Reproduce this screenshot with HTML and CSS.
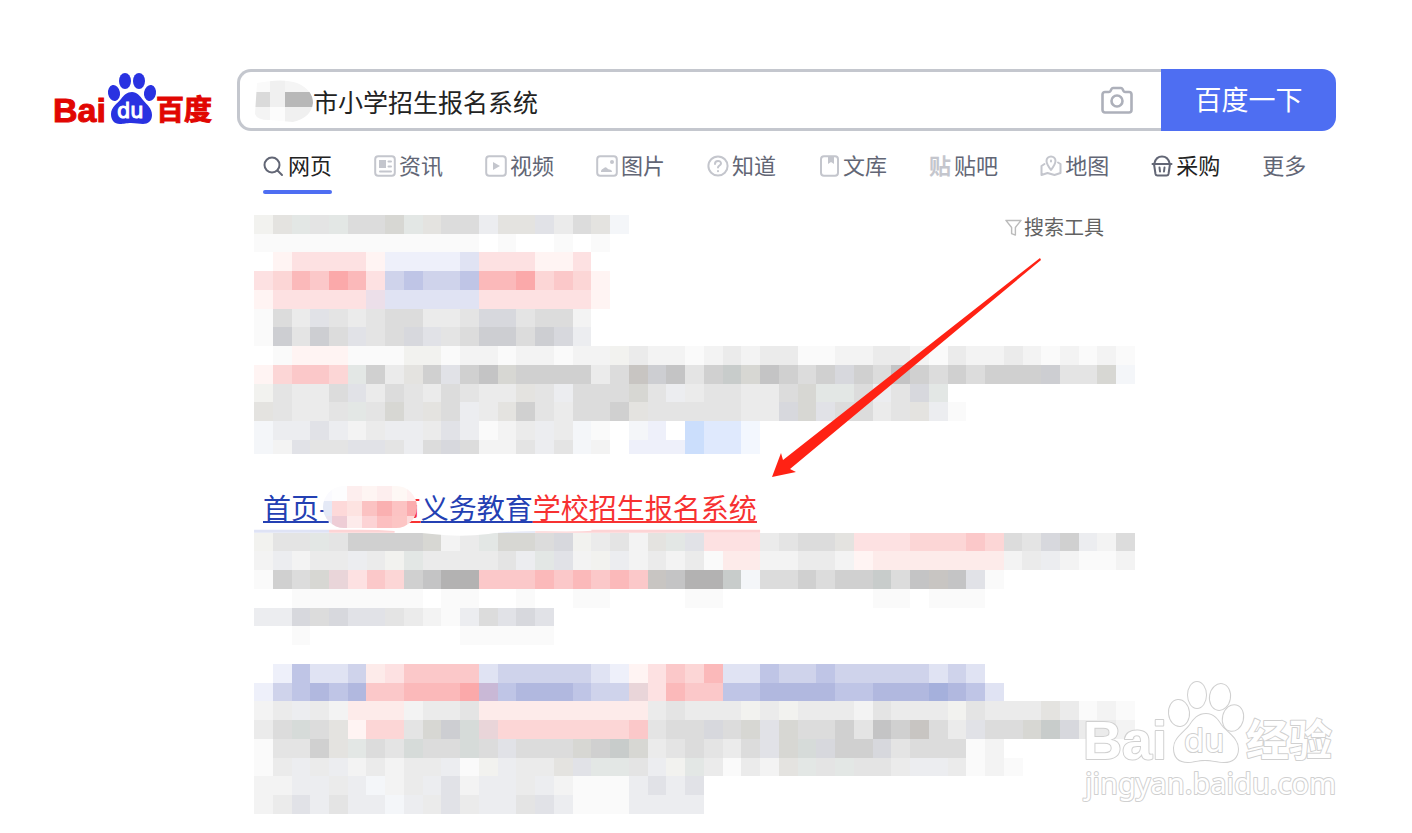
FILE: index.html
```
<!DOCTYPE html>
<html lang="zh-CN">
  <head>
    <meta charset="UTF-8" />
    <meta name="viewport" content="width=device-width, initial-scale=1" />
    <title>百度搜索</title>
    <link rel="stylesheet" href="styles.css" />
  </head>
  <body>
    <header class="header">
      <a class="logo" href="#" aria-label="百度">
        <svg viewBox="0 0 160 56" width="160" height="56">
          <text class="logo-latin" x="0" y="50">Bai</text>
          <g fill="#2932e1">
            <ellipse cx="61" cy="21" rx="6" ry="8" transform="rotate(-10 61 21)" />
            <ellipse cx="72" cy="9" rx="6" ry="8" />
            <ellipse cx="86" cy="9" rx="6" ry="8" />
            <ellipse cx="97" cy="21" rx="6" ry="8" transform="rotate(10 97 21)" />
            <path d="M79 20c5 0 8 4 11 8 4 5 9 8 9 15 0 6-4 9-9 9-4 0-7-1-12-1s-7 1-11 1c-6 0-9-4-9-10 0-7 6-10 10-15 3-4 6-7 11-7z" />
          </g>
          <text class="logo-du" x="64" y="46">du</text>
          <text class="logo-cjk" x="103" y="48">百度</text>
        </svg>
      </a>
      <form class="search" onsubmit="return false">
        <div class="search-box">
          <svg class="mask-small" viewBox="0 0 58 42" width="58" height="42" aria-hidden="true">
            <clipPath id="clip-small"><path d="M2 3Q28-2 42 3Q58 10 58 23Q56 38 38 42L14 40Q2 40 0 34z" /></clipPath>
            <g clip-path="url(#clip-small)" shape-rendering="crispEdges">
              <path fill="#fafafa" d="M0 0h15v12H0z" />
              <path fill="#f0f0f0" d="M15 0h15v12H15z" />
              <path fill="#f5f5f5" d="M30 0h28v12H30z" />
              <path fill="#dadada" d="M0 12h15v15H0z" />
              <path fill="#f0f0f0" d="M15 12h15v15H15z" />
              <path fill="#b8b8b8" d="M30 12h28v15H30z" />
              <path fill="#f4f4f4" d="M0 27h15v15H0z" />
              <path fill="#fcfcfc" d="M15 27h15v15H15z" />
              <path fill="#f0f0f0" d="M30 27h28v15H30z" />
            </g>
          </svg>
          <input type="text" class="search-input" value="市小学招生报名系统" aria-label="搜索" />
          <button type="button" class="camera-btn" aria-label="按图片搜索">
            <svg viewBox="0 0 32 28" width="32" height="28" fill="none" stroke="#adb0ba" stroke-width="2.6" stroke-linejoin="round">
              <path d="M4 6h4q1 0 1.500-1l1-2q.5-1 1.500-1h8q1 0 1.500 1l1 2q.5 1 1.500 1h4a2.500 2.500 0 0 1 2.500 2.500v15.500a2.500 2.500 0 0 1-2.500 2.500H4a2.500 2.500 0 0 1-2.500-2.500V8.500A2.500 2.500 0 0 1 4 6z" />
              <circle cx="16" cy="15" r="5.500" />
            </svg>
          </button>
        </div>
        <button type="submit" class="search-btn">百度一下</button>
      </form>
    </header>

    <nav class="tabs">
      <a class="tab active" href="#">
        <svg class="icon dark" viewBox="0 0 22 22"><circle cx="9" cy="10" r="7.500" /><path d="M14.500 15.500l4.500 4.500" /></svg>
        <span>网页</span>
      </a>
      <a class="tab" href="#">
        <svg class="icon" viewBox="0 0 22 22"><rect x="1.200" y="1.200" width="19.600" height="19.600" rx="3" /><path class="solid" d="M5 5h7v8H5z" /><path d="M14.500 6.500H17M14.500 11.500H17M6 16.500h11" /></svg>
        <span>资讯</span>
      </a>
      <a class="tab" href="#">
        <svg class="icon" viewBox="0 0 22 22"><rect x="1.200" y="1.200" width="19.600" height="19.600" rx="3" /><path class="solid" d="M8 7l7 4-7 4z" /></svg>
        <span>视频</span>
      </a>
      <a class="tab" href="#">
        <svg class="icon" viewBox="0 0 22 22"><rect x="1.200" y="1.200" width="19.600" height="19.600" rx="3" /><circle class="solid" cx="16" cy="7" r="2" /><path class="solid" d="M5 17c0-3 2-3 3-4 2-2 3 0 4 1s4 0 4 3z" /></svg>
        <span>图片</span>
      </a>
      <a class="tab" href="#">
        <svg class="icon" viewBox="0 0 22 22"><circle cx="11" cy="11" r="9.600" /><path d="M8 9c0-4 6-4 6-.5 0 2-3 2-3 4M11 16v.3" /></svg>
        <span>知道</span>
      </a>
      <a class="tab" href="#">
        <svg class="icon" viewBox="0 0 22 22"><rect x="3" y="1.200" width="17" height="19.600" rx="3" /><path class="solid" d="M10 2h6v7l-3-2-3 2z" /></svg>
        <span>文库</span>
      </a>
      <a class="tab" href="#">
        <span class="icon-word" aria-hidden="true">贴</span>
        <span>贴吧</span>
      </a>
      <a class="tab" href="#">
        <svg class="icon" viewBox="0 0 22 22"><path d="M11 15C8 11 6.500 9 6.500 6a4.500 4.500 0 0 1 9 0c0 3-1.500 5-4.500 9zM4.500 9L1.500 11v9l6-2 7 2 6-2V9l-2.500-1.500" /><path d="M11 5.500v1" /></svg>
        <span>地图</span>
      </a>
      <a class="tab strong" href="#">
        <svg class="icon dark" viewBox="0 0 22 22"><path d="M1.500 9h19M3 9l1.500 10q.3 1.500 2 1.500h9q1.700 0 2-1.500L19 9M3.500 8C4.500 4 7 1.500 11 1.500S17.500 4 18.500 8M8.500 12.500l.5 4M13.500 12.500l-.5 4" /></svg>
        <span>采购</span>
      </a>
      <a class="tab" href="#"><span>更多</span></a>
    </nav>

    <main class="results">
      <section class="first-result">
        <svg class="mosaic" data-block="first" viewBox="0 0 188 51" aria-hidden="true"></svg>
        <a class="tools" href="#">
          <svg viewBox="0 0 18 18" width="17" height="17" fill="none" stroke="#bbb" stroke-width="1.500" stroke-linejoin="round"><path d="M1 1.500h16L11 9v8l-4-1.500V9z" /></svg>
          <span>搜索工具</span>
        </a>
      </section>

      <section>
        <h3 class="title">
          <a href="#">首页-<span class="masked"><em>市</em><svg class="mask-title" viewBox="0 0 94 42" width="94" height="42" aria-hidden="true">
            <clipPath id="clip-title"><rect width="94" height="42" rx="21" /></clipPath>
            <g clip-path="url(#clip-title)" shape-rendering="crispEdges">
              <path fill="#fafafe" d="M0 0h9v15H0z" /><path fill="#fdfdfe" d="M9 0h15v15H9z" /><path fill="#fdeeee" d="M24 0h15v15H24z" /><path fill="#fef5f3" d="M39 0h15v15H39z" /><path fill="#fdeeee" d="M54 0h15v15H54z" /><path fill="#fef8f5" d="M69 0h15v15H69z" /><path fill="#fff0f0" d="M84 0h10v15H84z" />
              <path fill="#e4e9f6" d="M0 15h9v15H0z" /><path fill="#fdd9d9" d="M9 15h15v15H9z" /><path fill="#fde3e1" d="M24 15h15v15H24z" /><path fill="#fbc2c2" d="M39 15h15v15H39z" /><path fill="#fab0b1" d="M54 15h15v15H54z" /><path fill="#fcc3c3" d="M69 15h15v15H69z" /><path fill="#fbabae" d="M84 15h10v15H84z" />
              <path fill="#e8e4f0" d="M0 30h9v12H0z" /><path fill="#eecdd6" d="M9 30h15v12H9z" /><path fill="#fdebeb" d="M24 30h15v12H24z" /><path fill="#fcd3d5" d="M39 30h15v12H39z" /><path fill="#fcbfc0" d="M54 30h15v12H54z" /><path fill="#fcc5c4" d="M69 30h15v12H69z" /><path fill="#fcdcdc" d="M84 30h10v12H84z" />
            </g>
          </svg></span>义务教育<em>学校招生报名系统</em></a>
        </h3>
        <svg class="mosaic" data-block="second" viewBox="0 -1 188 25" aria-hidden="true">
          <path fill="#dfe3f5" d="M0-.6h16V0H0zM52-.6h8V0h-8z" />
          <path fill="#fdd4d5" d="M16-.6h14V0H16zM60-.6h48V0H60z" />
        </svg>
      </section>

      <section class="last-result">
        <svg class="mosaic" data-block="third" viewBox="0 0 188 32" aria-hidden="true"></svg>
      </section>

      <svg class="arrow" viewBox="0 0 270 219" width="270" height="219" aria-hidden="true">
        <path fill="#ff2214" d="M0 219L9 195l2 7L268 0l1 2L18 211l6 3z" />
      </svg>
    </main>

    <svg class="watermark" viewBox="0 0 260 130" width="260" height="130">
      <text class="wm-latin" x="3" y="81">Bai</text>
      <ellipse cx="99" cy="35" rx="10" ry="13" transform="rotate(-6 99 35)" />
      <ellipse cx="117" cy="17" rx="9" ry="13" />
      <ellipse cx="140" cy="19" rx="10" ry="13" transform="rotate(10 140 19)" />
      <ellipse cx="153" cy="40" rx="10" ry="13" transform="rotate(14 153 40)" />
      <path d="M126 36c8 0 12 6 15 11 6 8 17 13 17 24 0 9-6 13-14 13-7 0-11-2-19-2s-11 2-17 2c-9 0-14-5-14-14 0-10 10-15 16-23 4-6 8-11 16-11z" />
      <text class="wm-du" x="104" y="74">du</text>
      <text class="wm-cjk" x="166" y="78">经验</text>
      <text class="wm-url" x="5" y="116">jingyan.baidu.com</text>
    </svg>

    <script src="mosaic.js"></script>
  </body>
</html>
```

FILE: styles.css
```
* {
  box-sizing: border-box;
}

body {
  position: relative;
  margin: 0;
  padding: 69px 76px 18px 53px;
  background-color: #fff;
  color: #222;
  font-family: "Noto Sans CJK SC", sans-serif;
}

a {
  color: inherit;
  text-decoration: none;
}

.header {
  display: flex;
  gap: 24px;
}

.logo {
  flex: none;
  padding-top: 3px;
}

.logo svg {
  display: block;
}

.logo-latin {
  fill: #e10602;
  stroke: #e10602;
  stroke-width: 1;
  font: 700 34px "Liberation Sans", sans-serif;
}

.logo-du {
  fill: #fff;
  stroke: #fff;
  stroke-width: 1;
  font: 400 21px "DejaVu Sans", sans-serif;
}

.logo-cjk {
  fill: #e10602;
  stroke: #e10602;
  stroke-width: 1;
  font: 700 28px "Noto Sans CJK SC", sans-serif;
}

.search {
  display: flex;
  flex: 1;
  height: 62px;
}

.search-box {
  display: flex;
  flex: 1;
  align-items: center;
  border: 3px solid #c4c7ce;
  border-right: none;
  border-radius: 14px 0 0 14px;
  padding: 2px 28px 0 15px;
}

.mask-small {
  flex: none;
}

.search-input {
  flex: 1;
  min-width: 0;
  border: none;
  outline: none;
  padding: 0;
  background: transparent;
  color: #222;
  font-family: inherit;
  font-size: 25px;
}

.camera-btn {
  display: flex;
  border: none;
  padding: 0 0 2px;
  background: none;
  cursor: pointer;
}

.search-btn {
  width: 175px;
  border: none;
  border-radius: 0 14px 14px 0;
  padding-bottom: 4px;
  background-color: #4e6ef2;
  color: #fff;
  font-family: inherit;
  font-size: 27px;
  cursor: pointer;
}

.search-btn:hover {
  background-color: #4662d9;
}

.tabs {
  display: flex;
  gap: 42px;
  margin-top: 18px;
  padding-left: 210px;
}

.tab {
  display: flex;
  align-items: center;
  gap: 3px;
  height: 45px;
  padding-bottom: 12px;
  color: #626675;
  font-size: 22px;
  line-height: 30px;
  white-space: nowrap;
}

.tab span {
  padding-bottom: 4px;
}

.tab.active {
  position: relative;
  color: #222;
}

.tab.active::after {
  content: "";
  position: absolute;
  left: 0;
  right: 0;
  bottom: 0;
  height: 4px;
  border-radius: 2px;
  background-color: #4e6ef2;
}

.tab.strong {
  color: #222;
}

.icon {
  width: 22px;
  height: 22px;
  fill: none;
  stroke: #c4c6cd;
  stroke-width: 2;
  stroke-linecap: round;
  stroke-linejoin: round;
}

.icon.dark {
  stroke: #626675;
}

.icon .solid {
  fill: #c4c6cd;
  stroke: none;
}

.icon-word {
  color: #c4c6cd;
  font-weight: 700;
}

.results {
  position: relative;
  max-width: 1082px;
  margin-top: 21px;
  padding-left: 201px;
}

.mosaic {
  display: block;
  width: 100%;
}

.first-result {
  display: grid;
}

.first-result > * {
  grid-area: 1 / 1;
}

.tools {
  display: flex;
  align-items: center;
  align-self: start;
  justify-self: end;
  gap: 2px;
  margin-right: 31px;
  color: #626262;
  font-size: 20px;
  line-height: 24px;
}

.title {
  margin: 0;
  padding: 32px 0 0 9px;
  font-size: 28px;
  font-weight: 400;
  line-height: 42px;
}

.title a {
  color: #2440b3;
  text-decoration: underline;
  text-decoration-thickness: 2px;
  text-underline-offset: 2px;
}

.title em {
  color: #f73131;
  font-style: normal;
  text-decoration: underline;
  text-decoration-thickness: 2px;
  text-underline-offset: 2px;
}

.masked {
  display: inline-block;
  position: relative;
  width: 92px;
  text-align: right;
}

.mask-title {
  position: absolute;
  top: 0;
  right: 4px;
}

.last-result {
  margin-top: 19px;
}

/* hand-drawn pointer over the results */
.arrow {
  position: absolute;
  top: 43px;
  left: 719px;
}

.watermark {
  position: absolute;
  right: 72px;
  bottom: 24px;
  fill: #fff;
  stroke: #d0d0d0;
  stroke-width: 2;
  stroke-linejoin: round;
  paint-order: stroke;
}

.wm-latin {
  font: 700 54px "Liberation Sans", sans-serif;
}

.wm-du {
  font: 400 32px "DejaVu Sans", sans-serif;
}

.wm-cjk {
  font: 700 43px "Noto Sans CJK SC", sans-serif;
}

.wm-url {
  font: 400 29px "Noto Sans", sans-serif;
}
```

FILE: mosaic.js
```
const COLORS = {
  1: "#fafafa", 2: "#f3f3f3", 3: "#ebebeb", 4: "#e4e4e4",
  5: "#dcdcdc", 6: "#d0d0d0", 7: "#c4c4c5", 8: "#b3b2b2",
  a: "#f4f6f9", b: "#ecedf0", c: "#e1e2e7", d: "#d7d8dd", e: "#cdced2",
  w: "#f2f2ef", x: "#e4e3e0", y: "#d7d7d3", z: "#c8c5c2",
  g: "#e3e7e5", G: "#d6dbd9", h: "#c8cccb",
  p: "#fff4f3", P: "#fdebea", q: "#fde1e2", r: "#fcd6d6",
  s: "#fbc8c9", t: "#fbb9ba", u: "#fba9aa",
  i: "#eef0fa", j: "#e0e3f3", k: "#cfd3eb", l: "#bfc5e6",
  m: "#b1b8df", n: "#a5b0dc", v: "#c9b8d6", o: "#e9d5d9", J: "#ecdfe9",
  B: "#cbdefc", C: "#dfe9fd", D: "#f3f7fe",
};

const BLOCKS = {
  first: [
    "wxg4g55ygx55bxxc35xa",
    "111111111111.1..1.1.",
    ".pqqqqpiiiijqqqppq",
    "qrtsutqklkklttursrp",
    "pqqqqqJjjjjjqqqqqqp",
    "153c43455334dd4552",
    "1e4e5c45dc45ee5edb",
    ".1ppp111ww122122122w322123233112233213223212121",
    "prssrg63x6c67y666635ze746hy7656d6576565666e44ya",
    "w4335c35435433x4b555y4b344335ygg5b4dg",
    "x4334g4y4x5b3x643556x4444433dyc5534xb1",
    "abbcb23bb3cb123b3a1.ai.BCCD",
    "a2c44cc4b5d5224b4a2.iiiBCCD",
  ],
  second: [
    "w44g46666y23gyy5dw342xgcqqq3455xqqqrrrsr54d6b25",
    "2b233b3wg33334bgc2wb23231PP22332pPPPPPPP23b2112",
    "165yoqsr6788ssstststsz788ha556566h57z7c1",
    "..1111111.11..1..11....11........11.111",
    "bbd5dcc4321b5cdc",
    "..1........11111",
  ],
  third: [
    ".iljjkPqssssjkkkkkjipqsrtjjlkklkkkkkjkj",
    "iklmlmsstttuvlmmmlkkoqtssllmmmmllmmmnmlj",
    "23b32PPP2334PPPPPPPPP34333w3w33324333w4333x3121",
    "35G5xprr4yeGorrrrrrrs455d5ycy556476z53c55yhd332",
    "1446xg54G55G5c555y6hy345435cyGd66d455512",
    "13b3b23233b1wb33xcgg4bwg3132xg4g443bb3121",
    "22bb3ba23bc2bb3b2111bcbc",
    "23cb4bbab3c3bb4cb111bbbb",
  ],
};

const CELL = 4;
const SVG_NS = "http://www.w3.org/2000/svg";

function drawMosaic(svg) {
  const layer = document.createElementNS(SVG_NS, "g");
  layer.setAttribute("shape-rendering", "crispEdges");
  BLOCKS[svg.dataset.block].forEach((row, y) => {
    [...row].forEach((key, x) => {
      if (!COLORS[key]) return;
      const rect = document.createElementNS(SVG_NS, "rect");
      rect.setAttribute("x", x * CELL);
      rect.setAttribute("y", y * CELL);
      rect.setAttribute("width", CELL);
      rect.setAttribute("height", CELL);
      rect.setAttribute("fill", COLORS[key]);
      layer.appendChild(rect);
    });
  });
  svg.appendChild(layer);

  // the second block has a smudged white edge under the title
  if (svg.dataset.block === "second") {
    const edge = document.createElementNS(SVG_NS, "path");
    edge.setAttribute("d", "M18-1Q32-.4 38 .3T50 .3Q54-.4 62-.3T72-.4V-1z");
    edge.setAttribute("fill", "#fff");
    svg.appendChild(edge);
  }
}

document.querySelectorAll(".mosaic").forEach(drawMosaic);
```
